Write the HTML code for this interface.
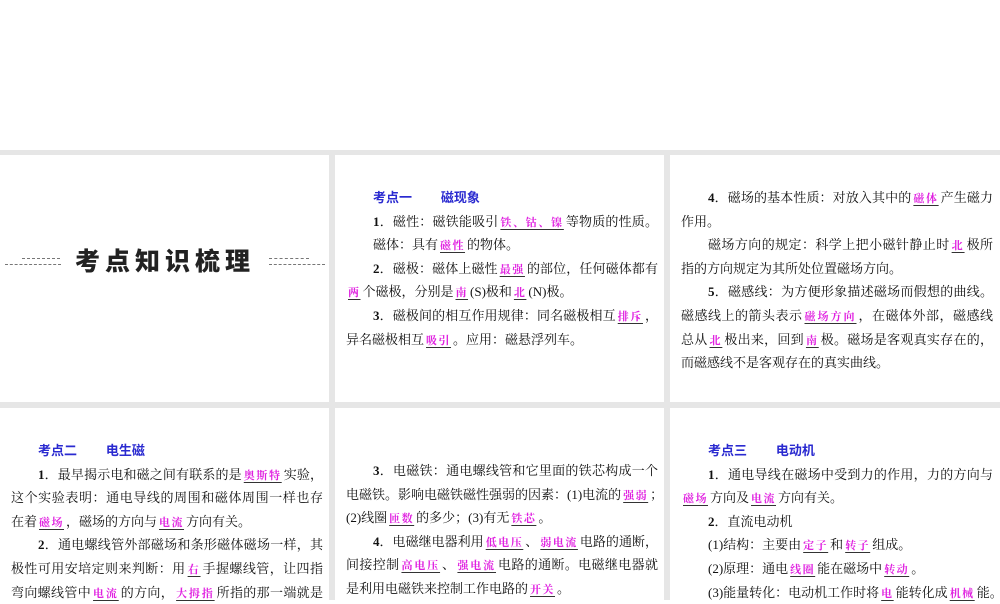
<!DOCTYPE html>
<html><head><meta charset="utf-8"><style>
body{margin:0;width:1000px;height:600px;overflow:hidden;background:#fff;position:relative;font-family:"Liberation Serif","Noto Serif CJK SC",serif;}
.bg{position:absolute;left:0;top:150px;width:1000px;height:450px;background:#e6e6e6;}
.p{position:absolute;background:#fff;}
.t{position:absolute;font-size:13px;color:#111;}
.l{height:23.6px;line-height:23.6px;white-space:nowrap;overflow:visible;}
.j{text-align:justify;text-align-last:justify;}
.i{padding-left:27px;}
.h{color:#2a2ad0;font-weight:bold;font-family:"Liberation Sans","Noto Sans CJK SC",sans-serif;}
b.k{color:#e020e0;font-weight:bold;font-size:11px;line-height:1;text-decoration:underline;text-decoration-color:#333;text-underline-offset:3px;padding:0 2px;letter-spacing:1.5px;}
.title{position:absolute;left:0;top:242px;width:330px;text-align:center;font-family:"Noto Sans CJK SC",sans-serif;font-weight:900;font-size:25px;letter-spacing:5px;color:#222;line-height:36px}
.d{position:absolute;height:0;border-top:1px dashed #777;}
</style></head><body>
<div class="bg"></div>
<div class="p" style="left:0;top:155px;width:329px;height:247px"></div>
<div class="p" style="left:335px;top:155px;width:329px;height:247px"></div>
<div class="p" style="left:670px;top:155px;width:330px;height:247px"></div>
<div class="p" style="left:0;top:408px;width:329px;height:192px"></div>
<div class="p" style="left:335px;top:408px;width:329px;height:192px"></div>
<div class="p" style="left:670px;top:408px;width:330px;height:192px"></div>

<div class="d" style="left:22px;top:258px;width:38px"></div>
<div class="d" style="left:5px;top:264px;width:56px"></div>
<div class="d" style="left:269px;top:258px;width:40px"></div>
<div class="d" style="left:269px;top:264px;width:56px"></div>
<div class="title">考点知识梳理</div>

<div class="t" style="left:346px;top:186px;width:312px">
<div class="l i"><span class="h">考点一&nbsp;&nbsp;&nbsp;&nbsp;&nbsp;&nbsp;&nbsp;&nbsp;磁现象</span></div>
<div class="l i j"><b>1</b>．磁性：磁铁能吸引<b class="k">铁、钴、镍</b>等物质的性质。</div>
<div class="l i">磁体：具有<b class="k">磁性</b>的物体。</div>
<div class="l i j"><b>2</b>．磁极：磁体上磁性<b class="k">最强</b>的部位，任何磁体都有</div>
<div class="l"><b class="k">两</b>个磁极，分别是<b class="k">南</b>(S)极和<b class="k">北</b>(N)极。</div>
<div class="l i j"><b>3</b>．磁极间的相互作用规律：同名磁极相互<b class="k">排斥</b>，</div>
<div class="l">异名磁极相互<b class="k">吸引</b>。应用：磁悬浮列车。</div>
</div>

<div class="t" style="left:681px;top:186px;width:312px">
<div class="l i j"><b>4</b>．磁场的基本性质：对放入其中的<b class="k">磁体</b>产生磁力</div>
<div class="l">作用。</div>
<div class="l i j">磁场方向的规定：科学上把小磁针静止时<b class="k">北</b>极所</div>
<div class="l">指的方向规定为其所处位置磁场方向。</div>
<div class="l i j"><b>5</b>．磁感线：为方便形象描述磁场而假想的曲线。</div>
<div class="l j">磁感线上的箭头表示<b class="k">磁场方向</b>，在磁体外部，磁感线</div>
<div class="l j">总从<b class="k">北</b>极出来，回到<b class="k">南</b>极。磁场是客观真实存在的，</div>
<div class="l">而磁感线不是客观存在的真实曲线。</div>
</div>

<div class="t" style="left:11px;top:439px;width:312px">
<div class="l i"><span class="h">考点二&nbsp;&nbsp;&nbsp;&nbsp;&nbsp;&nbsp;&nbsp;&nbsp;电生磁</span></div>
<div class="l i j"><b>1</b>．最早揭示电和磁之间有联系的是<b class="k">奥斯特</b>实验，</div>
<div class="l j">这个实验表明：通电导线的周围和磁体周围一样也存</div>
<div class="l">在着<b class="k">磁场</b>，磁场的方向与<b class="k">电流</b>方向有关。</div>
<div class="l i j"><b>2</b>．通电螺线管外部磁场和条形磁体磁场一样，其</div>
<div class="l j">极性可用安培定则来判断：用<b class="k">右</b>手握螺线管，让四指</div>
<div class="l j">弯向螺线管中<b class="k">电流</b>的方向，<b class="k">大拇指</b>所指的那一端就是</div>
</div>

<div class="t" style="left:346px;top:459px;width:312px">
<div class="l i j"><b>3</b>．电磁铁：通电螺线管和它里面的铁芯构成一个</div>
<div class="l j">电磁铁。影响电磁铁磁性强弱的因素：(1)电流的<b class="k">强弱</b>；</div>
<div class="l">(2)线圈<b class="k">匝数</b>的多少；(3)有无<b class="k">铁芯</b>。</div>
<div class="l i j"><b>4</b>．电磁继电器利用<b class="k">低电压</b>、<b class="k">弱电流</b>电路的通断，</div>
<div class="l j">间接控制<b class="k">高电压</b>、<b class="k">强电流</b>电路的通断。电磁继电器就</div>
<div class="l">是利用电磁铁来控制工作电路的<b class="k">开关</b>。</div>
</div>

<div class="t" style="left:681px;top:439px;width:312px">
<div class="l i"><span class="h">考点三&nbsp;&nbsp;&nbsp;&nbsp;&nbsp;&nbsp;&nbsp;&nbsp;电动机</span></div>
<div class="l i j"><b>1</b>．通电导线在磁场中受到力的作用，力的方向与</div>
<div class="l"><b class="k">磁场</b>方向及<b class="k">电流</b>方向有关。</div>
<div class="l i"><b>2</b>．直流电动机</div>
<div class="l i">(1)结构：主要由<b class="k">定子</b>和<b class="k">转子</b>组成。</div>
<div class="l i">(2)原理：通电<b class="k">线圈</b>能在磁场中<b class="k">转动</b>。</div>
<div class="l i j">(3)能量转化：电动机工作时将<b class="k">电</b>能转化成<b class="k">机械</b>能。</div>
</div>
</body></html>
